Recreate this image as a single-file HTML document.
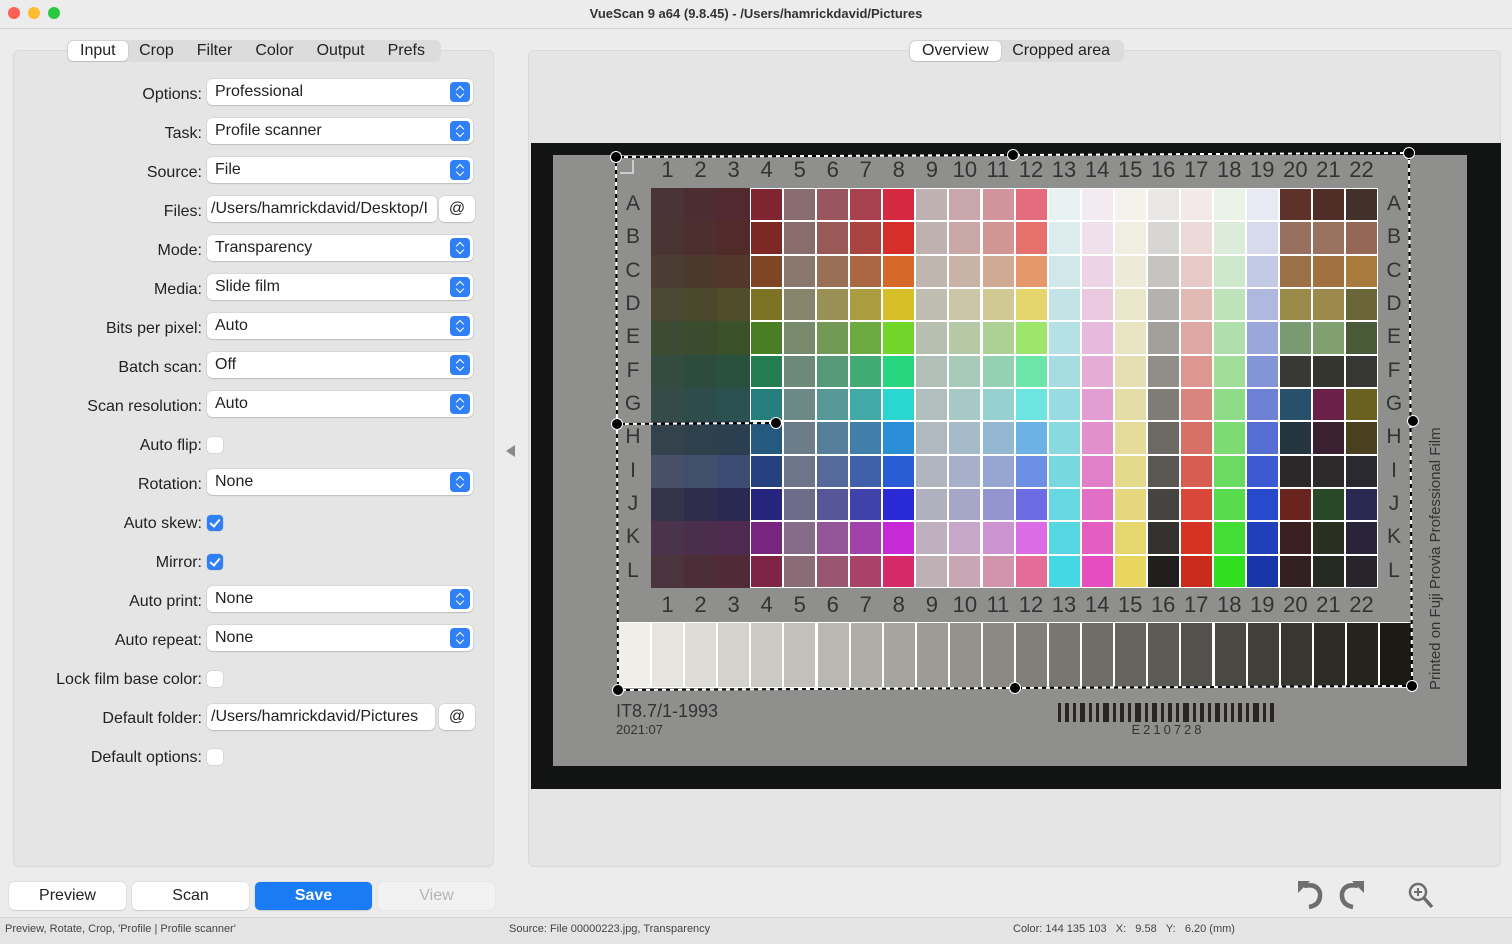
<!DOCTYPE html>
<html><head><meta charset="utf-8">
<style>
*{box-sizing:border-box;margin:0;padding:0}
body{width:1512px;height:944px;overflow:hidden;background:#ececec;font-family:"Liberation Sans",sans-serif;position:relative;color:#222}
.abs{position:absolute}
#title{left:0;top:0;width:1512px;height:28px;text-align:center;font-size:13px;font-weight:bold;line-height:27px;color:#333}
.dot{position:absolute;top:7px;width:12px;height:12px;border-radius:50%}
.panel{position:absolute;background:#e5e5e5;border:1px solid #dadada;border-radius:6px}
.seg{position:absolute;height:22px;background:#dcdcdc;border-radius:6px;display:flex;font-size:16px;align-items:center}
.seg span{padding:0 11.5px;line-height:20px;color:#222;position:relative}
.seg span.on{background:#fff;border-radius:5px;box-shadow:0 0 1px rgba(0,0,0,.3),0 1px 1px rgba(0,0,0,.1)}
.lbl{position:absolute;right:1310px;font-size:16px;text-align:right;white-space:nowrap;color:#222}
.pop{position:absolute;left:207px;width:266px;height:26px;background:#fff;border-radius:5px;box-shadow:0 0 1px rgba(0,0,0,.35),0 1px 1px rgba(0,0,0,.12);font-size:16px;padding-left:8px;line-height:25px}
.pop i{position:absolute;right:3px;top:3px;width:20px;height:20px;background:#2f7ff6;border-radius:4px}
.pop i:before,.pop i:after{content:"";position:absolute;left:7px;width:5px;height:5px;border:solid #fff;border-width:1.5px 1.5px 0 0}
.pop i:before{top:5px;transform:rotate(-45deg)}
.pop i:after{top:9px;transform:rotate(135deg)}
.cb{position:absolute;left:207px;width:16px;height:16px;border-radius:4px;background:#fff;box-shadow:0 0 1px rgba(0,0,0,.4)}
.cb.on{background:#2f7ff6}
.cb.on:after{content:"";position:absolute;left:5px;top:2px;width:4px;height:8px;border:solid #fff;border-width:0 2px 2px 0;transform:rotate(40deg)}
.btn{position:absolute;top:882px;width:117px;height:28px;background:#fff;border-radius:5px;box-shadow:0 0 1px rgba(0,0,0,.3),0 1px 1px rgba(0,0,0,.1);text-align:center;line-height:28px;font-size:16px}
.num{position:absolute;font-size:22px;color:#333;width:33px;text-align:center}
.let{position:absolute;font-size:21px;color:#333;width:20px;text-align:center}
.h{position:absolute;width:12px;height:12px;border-radius:50%;background:#000;border:1.5px solid #fff;margin:-6px 0 0 -6px}
.status{position:absolute;top:923px;font-size:11px;color:#444}
</style></head><body>
<div id="title" class="abs">VueScan 9 a64 (9.8.45) - /Users/hamrickdavid/Pictures</div>
<div class="dot" style="left:8px;background:#fe5f57"></div>
<div class="dot" style="left:28px;background:#febc2e"></div>
<div class="dot" style="left:48px;background:#28c840"></div>
<div class="abs" style="left:0;top:28px;width:1512px;height:1px;background:#d6d6d6"></div>

<div class="panel" style="left:13px;top:50px;width:481px;height:817px"></div>
<div class="panel" style="left:528px;top:50px;width:973px;height:817px"></div>

<div class="seg" style="left:67px;top:40px;width:374px"><span class="on" style="margin-left:1px;padding:0 12px">Input</span><span>Crop</span><span>Filter</span><span>Color</span><span>Output</span><span>Prefs</span></div>
<div class="seg" style="left:909px;top:40px;width:215px"><span class="on" style="margin-left:1px;padding:0 12px">Overview</span><span>Cropped area</span></div>

<div class="lbl" style="top:86px">Options:</div><div class="pop" style="top:79px">Professional<i></i></div>
<div class="lbl" style="top:125px">Task:</div><div class="pop" style="top:118px">Profile scanner<i></i></div>
<div class="lbl" style="top:164px">Source:</div><div class="pop" style="top:157px">File<i></i></div>
<div class="lbl" style="top:203px">Files:</div><div class="pop" style="top:196px;width:230px;padding-left:4px;overflow:hidden;white-space:nowrap">/Users/hamrickdavid/Desktop/I</div><div class="pop" style="top:196px;left:439px;width:36px;padding:0;text-align:center">@</div>
<div class="lbl" style="top:242px">Mode:</div><div class="pop" style="top:235px">Transparency<i></i></div>
<div class="lbl" style="top:281px">Media:</div><div class="pop" style="top:274px">Slide film<i></i></div>
<div class="lbl" style="top:320px">Bits per pixel:</div><div class="pop" style="top:313px">Auto<i></i></div>
<div class="lbl" style="top:359px">Batch scan:</div><div class="pop" style="top:352px">Off<i></i></div>
<div class="lbl" style="top:398px">Scan resolution:</div><div class="pop" style="top:391px">Auto<i></i></div>
<div class="lbl" style="top:437px">Auto flip:</div><div class="cb" style="top:437px"></div>
<div class="lbl" style="top:476px">Rotation:</div><div class="pop" style="top:469px">None<i></i></div>
<div class="lbl" style="top:515px">Auto skew:</div><div class="cb on" style="top:515px"></div>
<div class="lbl" style="top:554px">Mirror:</div><div class="cb on" style="top:554px"></div>
<div class="lbl" style="top:593px">Auto print:</div><div class="pop" style="top:586px">None<i></i></div>
<div class="lbl" style="top:632px">Auto repeat:</div><div class="pop" style="top:625px">None<i></i></div>
<div class="lbl" style="top:671px">Lock film base color:</div><div class="cb" style="top:671px"></div>
<div class="lbl" style="top:710px">Default folder:</div><div class="pop" style="top:704px;width:228px;padding-left:4px">/Users/hamrickdavid/Pictures</div><div class="pop" style="top:704px;left:439px;width:36px;padding:0;text-align:center">@</div>
<div class="lbl" style="top:749px">Default options:</div><div class="cb" style="top:749px"></div>

<div class="abs" style="left:506px;top:445px;width:0;height:0;border-top:6px solid transparent;border-bottom:6px solid transparent;border-right:9px solid #8a8a8a"></div>

<!-- image -->
<div class="abs" style="left:531px;top:143px;width:970px;height:646px;background:#121413"></div>
<div class="abs" style="left:553px;top:155px;width:914px;height:611px;background:#8f8f8d"></div>
<div class="abs" style="left:651px;top:188px;width:727px;height:400px;background:#fff"></div>
<div class="abs" style="left:618px;top:622px;width:794px;height:66px;background:#fff"></div>
<div id="grid"></div>
<div class="abs" style="left:620px;top:160px;width:14px;height:14px;border-left:2px solid #ccc;border-bottom:2px solid #ccc;transform:scaleX(-1)"></div>
<div id="labels"></div>
<div class="abs" style="left:616px;top:701px;font-size:18px;color:#333">IT8.7/1-1993</div>
<div class="abs" style="left:616px;top:722px;font-size:13px;color:#333">2021:07</div>
<div id="bar" class="abs" style="left:1058px;top:703px;width:220px;height:19px"></div>
<div class="abs" style="left:1120px;top:722px;width:96px;text-align:center;font-size:13px;letter-spacing:3px;color:#333">E210728</div>
<div class="abs" style="left:1427px;top:690px;transform-origin:0 0;transform:rotate(-90deg);font-size:15px;color:#333;white-space:nowrap">Printed on Fuji Provia Professional Film</div>

<svg class="abs" style="left:0;top:0" width="1512" height="944">
<g fill="none" stroke-width="2">
<polygon points="616,157 1409,153 1412,686 618,690" stroke="#000"/>
<polygon points="616,157 1409,153 1412,686 618,690" stroke="#fff" stroke-dasharray="4 4"/>
<line x1="617" y1="424" x2="776" y2="423" stroke="#000"/>
<line x1="617" y1="424" x2="776" y2="423" stroke="#fff" stroke-dasharray="4 4"/>
</g>
</svg>
<div class="h" style="left:616px;top:157px"></div><div class="h" style="left:1013px;top:155px"></div><div class="h" style="left:1409px;top:153px"></div>
<div class="h" style="left:1413px;top:421px"></div><div class="h" style="left:1412px;top:686px"></div><div class="h" style="left:1015px;top:688px"></div>
<div class="h" style="left:618px;top:690px"></div><div class="h" style="left:617px;top:424px"></div><div class="h" style="left:776px;top:423px"></div>

<div class="btn" style="left:9px">Preview</div>
<div class="btn" style="left:132px">Scan</div>
<div class="btn" style="left:255px;background:#1a7cf5;color:#fff;font-weight:bold">Save</div>
<div class="btn" style="left:378px;background:#f2f2f2;color:#b5b5b5;box-shadow:0 0 1px rgba(0,0,0,.15)">View</div>

<svg class="abs" style="left:1295px;top:878px" width="150" height="36" viewBox="0 0 150 36">
<g fill="none" stroke="#6e6e6e" stroke-width="4.5">
<path d="M9 8 Q22 5 25 15 Q26 27 14 29"/>
<path d="M63 8 Q50 5 47 15 Q46 27 58 29"/>
<circle cx="123" cy="14" r="8" stroke-width="2.5"/>
<path d="M129 20 L137 29" stroke-width="3.5"/>
<path d="M123 10 V18 M119 14 H127" stroke-width="2"/>
</g>
<path d="M3 3 L15 3 L3 15 Z" fill="#6e6e6e"/>
<path d="M69 3 L57 3 L69 15 Z" fill="#6e6e6e"/>
</svg>

<div class="abs" style="left:0;top:917px;width:1512px;height:27px;background:#e4e4e4;border-top:1px solid #d4d4d4"></div>
<div class="status" style="left:5px">Preview, Rotate, Crop, 'Profile | Profile scanner'</div>
<div class="status" style="left:509px">Source: File 00000223.jpg, Transparency</div>
<div class="status" style="left:1013px">Color: 144 135 103&nbsp;&nbsp;&nbsp;X:&nbsp;&nbsp;&nbsp;9.58&nbsp;&nbsp;&nbsp;Y:&nbsp;&nbsp;&nbsp;6.20 (mm)</div>

<script>
var hues=[352,2,22,52,95,150,178,205,222,240,295,338];
var g='';var cw=727/22,ch=400/12;
function c(col,r){
 var h=hues[r];
 if(col<3){var s=[18,25,32][col],l=[25,24,24][col];if(r==8)l=34;return 'hsl('+h+','+s+'%,'+l+'%)';}
 if(col<12){var p=[[55,32],[12,48],[28,47],[45,46],[68,50],[10,72],[25,72],[40,70],[70,66]][col-3];return 'hsl('+h+','+p[0]+'%,'+p[1]+'%)';}
 if(col<19){var k=r/11;
  var hh=[185,315,52,0,5,115,228][col-12];
  if(col==15){return 'hsl(40,4%,'+(91-k*79)+'%)';}
  var L=[[93,58],[94,60],[94,64],null,[93,45],[93,50],[93,38]][col-12];
  return 'hsl('+hh+','+(30+k*45)+'%,'+(L[0]-k*(L[0]-L[1]))+'%)';}
 var m=[["#5e3229","#502e27","#42302b"],["#987060","#9a7260","#946855"],["#9b7048","#a0723f","#a87a3c"],["#9a8a4a","#9b8a4c","#6a6638"],["#7a9a72","#80a070","#485a38"],["#383834","#353530","#363634"],["#28506a","#6a2048","#6a6020"],["#243540","#3a2030","#4a4020"],["#2a2828","#2c2a2a","#2a2830"],["#6a2420","#284828","#282850"],["#3a2020","#2a3020","#2a2438"],["#332020","#242a20","#28242e"]];
 return m[r][col-19];
}
for(var r=0;r<12;r++)for(var col=0;col<22;col++){
 var x=651+col*cw,y=188+r*ch,w=cw,hh=ch;
 if(col>=3){x+=1;y+=1;w-=2;hh-=2;}
 g+='<div class="abs" style="left:'+x.toFixed(1)+'px;top:'+y.toFixed(1)+'px;width:'+w.toFixed(1)+'px;height:'+hh.toFixed(1)+'px;background:'+c(col,r)+'"></div>';
}
var sw=794/24;
for(var i=0;i<24;i++){var v=Math.round(240-i*212/23);
 g+='<div class="abs" style="left:'+(619+i*sw).toFixed(1)+'px;top:623px;width:'+(sw-2).toFixed(1)+'px;height:64px;background:rgb('+v+','+(v-2)+','+(v-8)+')"></div>';}
document.getElementById('grid').innerHTML=g;
var L='';var lets='ABCDEFGHIJKL';
for(var i=0;i<22;i++){var x=651+i*cw;
 L+='<div class="num" style="left:'+x.toFixed(1)+'px;top:157px">'+(i+1)+'</div>';
 L+='<div class="num" style="left:'+x.toFixed(1)+'px;top:592px">'+(i+1)+'</div>';}
for(var r=0;r<12;r++){var y=188+r*ch+4;
 L+='<div class="let" style="left:623px;top:'+y.toFixed(1)+'px">'+lets[r]+'</div>';
 L+='<div class="let" style="left:1384px;top:'+y.toFixed(1)+'px">'+lets[r]+'</div>';}
document.getElementById('labels').innerHTML=L;
var b='',x=0,ws=[3,2,4,2,3,2,5,2,3,2,3,2,6,2,3,2,4,2,3,2,6,2,3,2,5,2,3,2,4,2,3,2,6,2,3,2,4,2,3,2,5,2,3,2,3,2,4,2,3,2,6,2,3,2,4,2,3,2];
for(var i=0;i<ws.length&&x<216;i++){if(i%2==0)b+='<div class="abs" style="left:'+x+'px;top:0;width:'+ws[i]+'px;height:19px;background:#2a2424"></div>';x+=ws[i]+1;}
document.getElementById('bar').innerHTML=b;
</script>
</body></html>
